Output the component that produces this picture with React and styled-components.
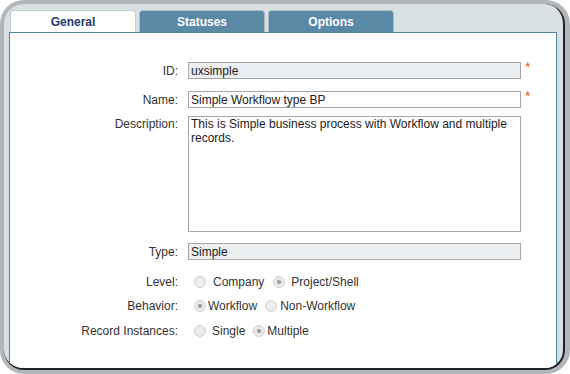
import React from 'react';
import styled, { createGlobalStyle } from 'styled-components';

const GlobalStyle = createGlobalStyle`
  html, body {
    margin: 0;
    padding: 0;
    background: #ffffff;
  }
  body {
    font-family: "Liberation Sans", Arial, sans-serif;
    font-size: 12px;
  }
`;

const Frame = styled.div`
  width: 570px;
  height: 374px;
  box-sizing: border-box;
  background: #b2b5b9;
  border-radius: 24px;
  padding: 4px 5px 4px 4px;
`;

const Inner = styled.div`
  height: 100%;
  box-sizing: border-box;
  background: #d8e0e4;
  border-radius: 20px;
  border-right: 2px solid #1f2224;
  border-bottom: 2px solid #1f2224;
  overflow: hidden;
  padding: 6px 6px 0 5px;
  display: flex;
  flex-direction: column;
`;

const Tabs = styled.div`
  display: flex;
  gap: 3px;
  height: 22px;
  padding-left: 1px;
`;

const Tab = styled.div`
  width: 126px;
  box-sizing: border-box;
  display: flex;
  align-items: center;
  justify-content: center;
  border: 1px solid ${p => (p.$active ? '#c4cbcf' : '#a9bcc8')};
  border-bottom: none;
  border-radius: 4px 4px 0 0;
  background: ${p => (p.$active ? '#ffffff' : '#5a89a6')};
  color: ${p => (p.$active ? '#1f3a70' : '#ffffff')};
  font-weight: bold;
  font-size: 12px;
  padding-top: 1px;
`;

const Panel = styled.div`
  flex: 1;
  background: #ffffff;
  border: 1px solid #4d86a2;
  border-bottom: none;
  padding-top: 29px;
  display: flex;
  flex-direction: column;
`;

const Row = styled.div`
  display: flex;
  align-items: ${p => (p.$top ? 'flex-start' : 'center')};
  margin-top: ${p => p.$mt || 0}px;
`;

const Label = styled.div`
  flex: 0 0 168px;
  margin-right: 10px;
  text-align: right;
  color: #333333;
  line-height: 14px;
  padding-top: ${p => (p.$top ? 1 : 0)}px;
`;

const Input = styled.input`
  width: 333px;
  height: 17px;
  box-sizing: border-box;
  margin: 0;
  border: 1px solid #a6a6a6;
  background: ${p => (p.$disabled ? '#eceff1' : '#ffffff')};
  padding: 0 2px;
  font-family: "Liberation Sans", Arial, sans-serif;
  font-size: 12px;
  color: #1c1c1c;
  outline: none;
`;

const TextArea = styled.textarea`
  width: 333px;
  height: 116px;
  box-sizing: border-box;
  margin: 0;
  border: 1px solid #a6a6a6;
  padding: 0 2px;
  font-family: "Liberation Sans", Arial, sans-serif;
  font-size: 12px;
  line-height: 14px;
  color: #1c1c1c;
  resize: none;
  outline: none;
  overflow: hidden;
`;

const Required = styled.span`
  color: #f15a24;
  font-size: 14px;
  margin-left: 4px;
  align-self: flex-start;
  margin-top: -3px;
`;

const Options = styled.div`
  display: flex;
  align-items: center;
  height: 16px;
`;

const Radio = styled.span`
  width: 12px;
  height: 12px;
  box-sizing: border-box;
  border-radius: 50%;
  border: 1px solid #d2d2d2;
  background: radial-gradient(circle at 50% 50%, ${p => (p.$checked ? '#9b9b9b 0, #a5a5a5 1.8px, #e9e9e9 2.6px, #ededed 100%' : '#f1f1f1 0, #e6e6e6 100%')});
  margin-left: ${p => p.$ml}px;
  flex: 0 0 auto;
`;

const OptionText = styled.span`
  color: #333333;
  font-size: 12px;
  margin-left: ${p => p.$ml}px;
  line-height: 15px;
  padding-top: 1px;
`;

const radioRows = [
  {
    label: 'Level:',
    mt: 14,
    options: [
      { text: 'Company', checked: false, rm: 6, tm: 7 },
      { text: 'Project/Shell', checked: true, rm: 9, tm: 6 },
    ],
  },
  {
    label: 'Behavior:',
    mt: 8,
    options: [
      { text: 'Workflow', checked: true, rm: 6, tm: 2 },
      { text: 'Non-Workflow', checked: false, rm: 8, tm: 3 },
    ],
  },
  {
    label: 'Record Instances:',
    mt: 9,
    options: [
      { text: 'Single', checked: false, rm: 6, tm: 6 },
      { text: 'Multiple', checked: true, rm: 8, tm: 2 },
    ],
  },
];

export default function App() {
  return (
    <>
      <GlobalStyle />
      <Frame>
        <Inner>
          <Tabs>
            <Tab $active>General</Tab>
            <Tab>Statuses</Tab>
            <Tab>Options</Tab>
          </Tabs>
          <Panel>
            <Row>
              <Label>ID:</Label>
              <Input $disabled readOnly value="uxsimple" />
              <Required>*</Required>
            </Row>
            <Row $mt={12}>
              <Label>Name:</Label>
              <Input readOnly value="Simple Workflow type BP" />
              <Required>*</Required>
            </Row>
            <Row $mt={8} $top>
              <Label $top>Description:</Label>
              <TextArea
                readOnly
                value="This is Simple business process with Workflow and multiple records."
              />
            </Row>
            <Row $mt={11}>
              <Label>Type:</Label>
              <Input $disabled readOnly value="Simple" />
            </Row>
            {radioRows.map(row => (
              <Row key={row.label} $mt={row.mt}>
                <Label>{row.label}</Label>
                <Options>
                  {row.options.map(opt => (
                    <React.Fragment key={opt.text}>
                      <Radio $checked={opt.checked} $ml={opt.rm} />
                      <OptionText $ml={opt.tm}>{opt.text}</OptionText>
                    </React.Fragment>
                  ))}
                </Options>
              </Row>
            ))}
          </Panel>
        </Inner>
      </Frame>
    </>
  );
}
